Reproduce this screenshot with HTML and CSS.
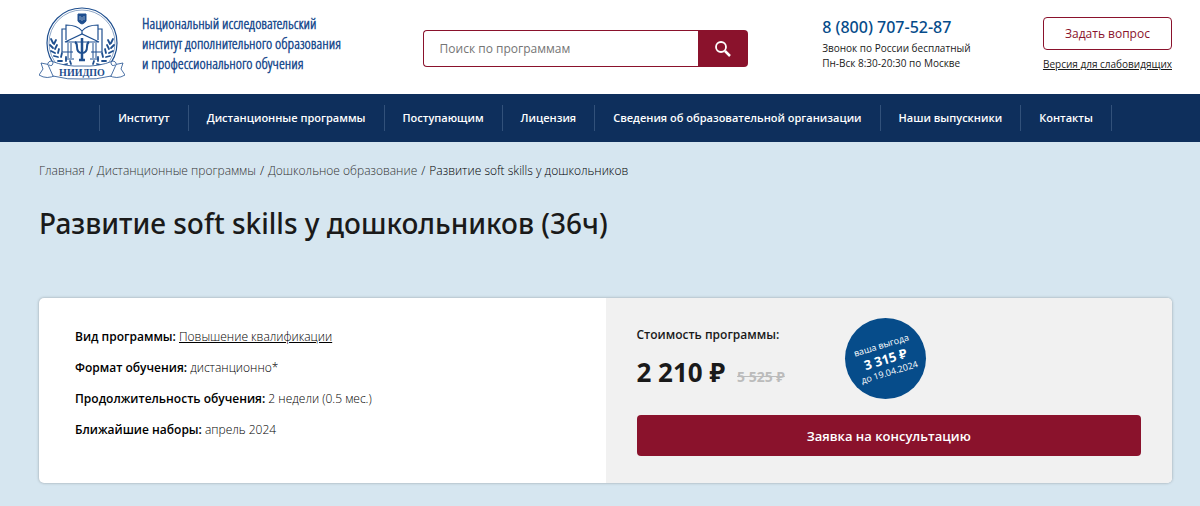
FILE: index.html
```html
<!DOCTYPE html>
<html lang="ru">

<head>
  <meta charset="UTF-8">
  <meta name="viewport" content="width=device-width, initial-scale=1.0">
  <title>Развитие soft skills у дошкольников (36ч)</title>
  <link rel="stylesheet" href="styles.css">
</head>

<body>
  <header class="header container">
    <a href="#" class="logo">
      <svg class="logo-icon" viewBox="0 0 86 74" width="86" height="74" fill="none" stroke="#1f4f8f" aria-hidden="true">
        <!-- round frame -->
        <circle cx="43" cy="36" r="35" stroke-width="1.200"/>
        <circle cx="43" cy="36" r="33" stroke-width=".5"/>
        <!-- laurel -->
        <path d="M14 36l-2-4M14 41l-3-3M16 46l-4-2M19 50l-4-1M23 54l-4 0M28 57l-4 1M15 37l2-4M16 42l2-4M19 46l1-4M22 50l1-4M27 54l0-4M32 57l-1-3M72 36l2-4M72 41l3-3M70 46l4-2M67 50l4-1M63 54l4 0M58 57l4 1M71 37l-2-4M70 42l-2-4M67 46l-1-4M64 50l-1-4M59 54l0-4M54 57l1-3" stroke-width="1.800" stroke-linecap="round"/>
        <!-- emblem on top -->
        <path d="M39 7h8v7q-1 2-4 3q-3-1-4-3z" fill="#1f4f8f"/>
        <path d="M41 9v4M43 10v4M45 9v4" stroke="#fff" stroke-width=".5"/>
        <!-- open book -->
        <path d="M43 24C39 19 33 18 27 18V33M43 24C47 19 53 18 59 18V33M27 22H23V45H34M59 22H63V45H52M43 24V27" stroke-width="1.200"/>
        <!-- temple with psi -->
        <path d="M26 35L43 27L60 35Z" stroke-width="1.200"/>
        <path d="M29 36V51M32 36V51M54 36V51M57 36V51M26 52H35M51 52H60" stroke-width="1"/>
        <path d="M43 31V53M40 53H46" stroke-width="2.500"/>
        <path d="M36 35Q38 36 38 40Q38 46 43 46Q48 46 48 40Q48 36 50 35" stroke-width="2"/>
        <!-- ribbon -->
        <path d="M12 58L2 56L4 62L0 68Q8 73 17 68V64M74 58L84 56L82 62L86 68Q78 73 69 68V64" fill="#fff" stroke-width=".8"/>
        <path d="M12 54Q27 60 43 59Q59 60 74 54Q79 55 76 60L72 69Q57 73 43 72Q29 73 14 69L10 60Q7 55 12 54Z" fill="#fff" stroke-width=".8"/>
        <path d="M10 58Q14 60 14 55M76 58Q72 60 72 55" stroke-width=".8"/>
        <text x="43" y="69" class="logo-caption" text-anchor="middle">НИИДПО</text>
      </svg>
      <span class="logo-text">Национальный исследовательский<br>институт дополнительного образования<br>и профессионального обучения</span>
    </a>

    <form class="search">
      <input type="text" name="q" placeholder="Поиск по программам" aria-label="Поиск по программам">
      <button type="submit" aria-label="Найти">
        <svg viewBox="0 0 16 16" width="16" height="16" fill="none" stroke="#fff" aria-hidden="true">
          <circle cx="6" cy="6" r="5" stroke-width="1.800"/>
          <path d="M10 10L15 15" stroke-width="2.500"/>
        </svg>
      </button>
    </form>

    <div class="phone">
      <a href="tel:88007075287">8 (800) 707-52-87</a>
      <p>Звонок по России бесплатный</p>
      <p>Пн-Вск 8:30-20:30 по Москве</p>
    </div>

    <div class="actions">
      <button type="button" class="ask-btn">Задать вопрос</button>
      <a href="#">Версия для слабовидящих</a>
    </div>
  </header>

  <nav class="nav-bar">
    <div class="nav-links container">
      <a href="#">Институт</a>
      <a href="#">Дистанционные программы</a>
      <a href="#">Поступающим</a>
      <a href="#">Лицензия</a>
      <a href="#">Сведения об образовательной организации</a>
      <a href="#">Наши выпускники</a>
      <a href="#">Контакты</a>
    </div>
  </nav>

  <main class="container">
    <div class="breadcrumbs">
      <a href="#">Главная</a>
      <span>/</span>
      <a href="#">Дистанционные программы</a>
      <span>/</span>
      <a href="#">Дошкольное образование</a>
      <span>/</span>
      <span class="current">Развитие soft skills у дошкольников</span>
    </div>

    <h1>Развитие soft skills у дошкольников (36ч)</h1>

    <section class="card">
      <div class="card-info">
        <p><b>Вид программы:</b> <a href="#">Повышение квалификации</a></p>
        <p><b>Формат обучения:</b> дистанционно*</p>
        <p><b>Продолжительность обучения:</b> 2 недели (0.5 мес.)</p>
        <p><b>Ближайшие наборы:</b> апрель 2024</p>
      </div>
      <div class="card-price">
        <div class="price-row">
          <div class="price">
            <p class="price-label">Стоимость программы:</p>
            <div class="price-values">
              <strong>2 210 ₽</strong>
              <del>5 525 ₽</del>
            </div>
          </div>
          <div class="benefit">
            <div class="benefit-text">ваша выгода<b>3 315 ₽</b>до 19.04.2024</div>
          </div>
        </div>
        <button type="button" class="order-btn">Заявка на консультацию</button>
      </div>
    </section>
  </main>
</body>

</html>
```
FILE: styles.css
```css
* {
  box-sizing: border-box;
}

body {
  margin: 0;
  font-family: 'Open Sans', 'Noto Sans', sans-serif;
  font-size: 12px;
  color: #1a1a1a;
  background-color: #d6e6f0;
}

p {
  margin: 0;
}

button,
input {
  font-family: inherit;
}

button {
  cursor: pointer;
}

.container {
  padding-left: 39px;
  padding-right: 28px;
}

/* header */
.header {
  display: grid;
  grid-template-columns: 384fr 400fr 221fr 129fr;
  height: 94px;
  background-color: #ffffff;
}

.logo {
  display: flex;
  gap: 17px;
  padding-top: 7px;
  color: #1f4f8f;
  text-decoration: none;
}

.logo-icon {
  flex: none;
}

.logo-caption {
  font-family: 'Liberation Serif', serif;
  font-size: 10px;
  font-weight: bold;
  fill: #1f4f8f;
  stroke: none;
}

.logo-text {
  padding-top: 6px;
  font-family: 'Open Sans Condensed Light', 'Open Sans Condensed', sans-serif;
  font-size: 15px;
  font-weight: 600;
  line-height: 20px;
  white-space: nowrap;
}

.search {
  display: flex;
  height: 37px;
  margin-top: 30px;
  margin-right: 74px;
}

.search input {
  flex: 1;
  min-width: 0;
  padding: 0 16px;
  border: 1px solid #8a122c;
  border-right: none;
  border-radius: 4px 0 0 4px;
  font-size: 12px;
}

.search input::placeholder {
  color: #757575;
}

.search button {
  display: flex;
  align-items: center;
  justify-content: center;
  width: 50px;
  padding: 0;
  border: none;
  border-radius: 0 4px 4px 0;
  background-color: #8a122c;
}

.phone {
  padding-top: 16px;
  font-size: 10px;
  line-height: 15px;
  white-space: nowrap;
}

.phone a {
  display: block;
  margin-bottom: 3px;
  font-family: 'Noto Sans', 'Open Sans', sans-serif;
  font-size: 16px;
  font-weight: 500;
  line-height: 22px;
  color: #064c8a;
  text-decoration: none;
}

.actions {
  display: flex;
  flex-direction: column;
  align-items: flex-end;
  gap: 7px;
  padding-top: 17px;
}

.ask-btn {
  width: 100%;
  height: 33px;
  padding: 0;
  border: 1px solid #8a122c;
  border-radius: 4px;
  background-color: #ffffff;
  color: #8a122c;
  font-size: 12px;
}

.actions a {
  font-size: 10px;
  line-height: 14px;
  color: #1a1a1a;
  white-space: nowrap;
}

/* menu */
.nav-bar {
  padding: 11px 0;
  background-color: #0e2f5c;
}

.nav-links {
  display: flex;
  justify-content: center;
}

.nav-links a {
  padding: 0 18px;
  border-right: 1px solid #32517a;
  color: #ffffff;
  font-size: 11px;
  font-weight: 600;
  line-height: 26px;
  text-decoration: none;
  white-space: nowrap;
}

.nav-links a:first-child {
  border-left: 1px solid #32517a;
}

/* content */
.breadcrumbs {
  display: flex;
  gap: 4px;
  padding-top: 20px;
  font-weight: 300;
  line-height: 18px;
  color: #000000;
}

.breadcrumbs a {
  color: #333333;
  text-decoration: none;
}

h1 {
  margin: 24px 0 56px;
  font-family: 'Noto Sans', 'Open Sans', sans-serif;
  font-size: 28px;
  font-weight: 500;
  line-height: 38px;
}

.card {
  display: grid;
  grid-template-columns: 1fr 1fr;
  margin-bottom: 23px;
  border-radius: 5px;
  background-color: #ffffff;
  box-shadow: 0 0 3px rgba(0, 0, 0, 0.3);
  overflow: hidden;
}

.card-info {
  display: flex;
  flex-direction: column;
  gap: 13px;
  padding: 30px 36px;
  font-weight: 300;
  line-height: 18px;
  color: #000000;
}

.card-info b {
  font-weight: 600;
}

.card-info a {
  color: inherit;
}

.card-price {
  padding: 20px 31px 27px;
  background-color: #f1f1f1;
}

.price-row {
  display: flex;
  gap: 60px;
  margin-bottom: 16px;
}

.price-label {
  margin: 8px 0;
  font-weight: 600;
  line-height: 18px;
}

.price-values {
  display: flex;
  align-items: baseline;
  gap: 12px;
  line-height: 40px;
  white-space: nowrap;
}

.price-values strong {
  font-size: 26px;
}

.price-values del {
  font-size: 14px;
  font-weight: bold;
  color: #bbbbbb;
}

.benefit {
  display: flex;
  align-items: center;
  justify-content: center;
  flex: none;
  width: 81px;
  height: 81px;
  border-radius: 50%;
  background-color: #064c8a;
  color: #ffffff;
}

.benefit-text {
  font-size: 9px;
  line-height: 14px;
  text-align: center;
  white-space: nowrap;
  transform: rotate(-17deg);
}

.benefit-text b {
  display: block;
  font-size: 13px;
}

.order-btn {
  width: 100%;
  height: 41px;
  border: none;
  border-radius: 4px;
  background-color: #8a122c;
  color: #ffffff;
  font-size: 13px;
  font-weight: 600;
}
```
